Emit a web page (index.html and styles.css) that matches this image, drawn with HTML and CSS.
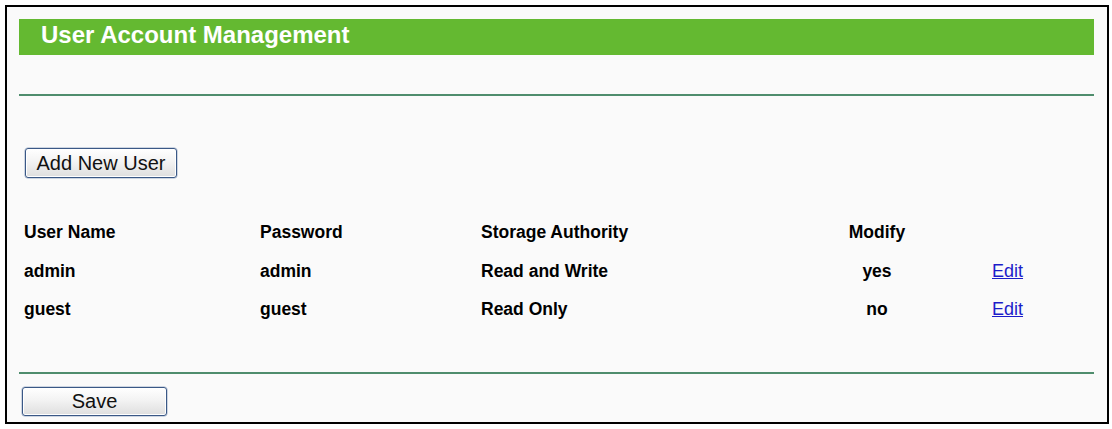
FILE: index.html
```html
<!DOCTYPE html>
<html>
<head>
<meta charset="utf-8">
<link rel="stylesheet" href="styles.css">
</head>
<body>
<div class="frame">
  <div class="title-bar">User Account Management</div>
  <div class="rule rule-top"></div>
  <div class="actions">
    <button class="btn btn-add" type="button">Add New User</button>
  </div>
  <div class="users">
    <div class="cell head">User Name</div>
    <div class="cell head">Password</div>
    <div class="cell head">Storage Authority</div>
    <div class="cell head center">Modify</div>
    <div class="cell head"></div>

    <div class="cell">admin</div>
    <div class="cell">admin</div>
    <div class="cell">Read and Write</div>
    <div class="cell center">yes</div>
    <div class="cell"><a class="edit" href="#">Edit</a></div>

    <div class="cell">guest</div>
    <div class="cell">guest</div>
    <div class="cell">Read Only</div>
    <div class="cell center">no</div>
    <div class="cell"><a class="edit" href="#">Edit</a></div>
  </div>
  <div class="rule rule-bottom"></div>
  <div class="footer">
    <button class="btn btn-save" type="button">Save</button>
  </div>
</div>
</body>
</html>
```

FILE: styles.css
```css
html, body {
  margin: 0;
  padding: 0;
  background: #ffffff;
}

body {
  font-family: "Liberation Sans", Arial, sans-serif;
  color: #000;
}

.frame {
  margin: 5px 0 0 5px;
  width: 1104px;
  height: 419px;
  box-sizing: border-box;
  border: 2px solid #000;
  background: #fafafa;
  padding: 12px 13px 0 12px;
  display: flex;
  flex-direction: column;
}

.title-bar {
  height: 36px;
  box-sizing: border-box;
  background: #64b931;
  color: #fff;
  font-size: 24px;
  font-weight: bold;
  line-height: 32px;
  padding: 0 0 4px 22px;
}

.rule {
  height: 2px;
  background: #4f8d6d;
}

.rule-top {
  margin-top: 39px;
}

.actions {
  margin-top: 52px;
  padding-left: 6px;
}

.btn {
  font-family: "Liberation Sans", Arial, sans-serif;
  font-size: 20px;
  color: #111;
  background: linear-gradient(#ffffff, #f3f3f3 45%, #dedede);
  border: 1px solid #3a5886;
  border-radius: 3px;
  box-shadow: inset 0 0 0 1px #ffffff, 0 0 0 0.5px #9fb0c8;
  padding: 0;
  margin: 0;
  display: block;
}

.btn-add {
  width: 152px;
  height: 30px;
}

.btn-save {
  width: 145px;
  height: 29px;
}

.users {
  margin-top: 35px;
  padding-left: 5px;
  display: grid;
  grid-template-columns: 236px 221px 281px 230px 1fr;
  grid-auto-rows: 38.5px;
}

.cell {
  font-size: 17.5px;
  font-weight: bold;
  line-height: 38.5px;
  white-space: nowrap;
}

.center {
  text-align: center;
}

.edit {
  font-weight: normal;
  font-size: 18px;
  color: #1c1cc9;
  text-decoration: underline;
}

.rule-bottom {
  margin-top: 43px;
}

.footer {
  margin-top: 13px;
  padding-left: 3px;
}
```
